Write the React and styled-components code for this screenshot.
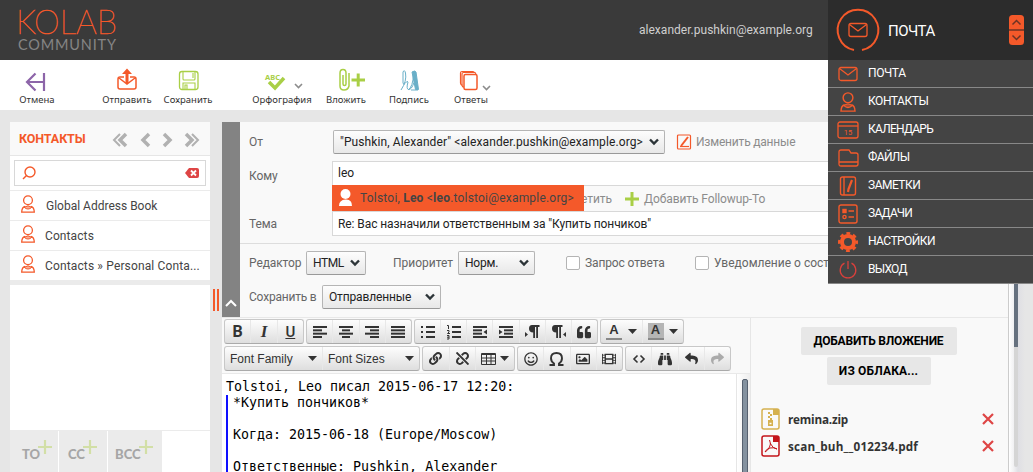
import React from "react";
import styled, { createGlobalStyle, css } from "styled-components";
import {
  FaLink,
  FaUnlink,
  FaRegSmile,
  FaBinoculars,
  FaReply,
  FaShare,
  FaQuoteLeft,
  FaRegImage,
  FaFilm,
} from "react-icons/fa";

const orange = "#f4592a";
const green = "#a9cf46";

const GlobalStyle = createGlobalStyle`
  * { box-sizing: border-box; }
  body {
    margin: 0;
    overflow: hidden;
    background: #e6e6e6;
    font-family: Roboto, "Noto Sans", sans-serif;
    font-size: 12px;
    color: #333;
  }
  svg { display: block; flex: none; overflow: visible; }
`;

const Page = styled.div`
  position: relative;
  display: flex;
  flex-direction: column;
  width: 1033px;
  height: 472px;
  overflow: hidden;
`;

/* letter spacing differs between labels, so every text takes it as a prop */
const Text = styled.span`
  white-space: nowrap;
  letter-spacing: ${(p) => p.$ls || 0}px;
`;

const Header = styled.header`
  display: flex;
  flex: none;
  align-items: center;
  height: 60px;
  padding-left: 18px;
  background: #3a3a3a;
`;

const User = styled(Text)`
  width: 174px;
  margin: 0 15px 0 auto;
  color: #cfcfcf;
`;

const Current = styled.div`
  display: flex;
  align-items: center;
  width: 205px;
  height: 60px;
  padding: 0 9px 0 9px;
  background: #2c2c2c;
  color: #fff;
  font-size: 15px;

  ${Text} { margin: 2px auto 0 9px; }
`;

const TaskMenu = styled.nav`
  position: absolute;
  top: 60px;
  right: 0;
  width: 205px;
  background: #444;
  z-index: 2;
`;

const TaskItem = styled.a`
  display: flex;
  align-items: center;
  gap: 9px;
  height: 28px;
  padding-left: 9px;
  border-bottom: 1px solid #888;
  color: #fff;
  font-size: 12px;

  ${Text} { margin-top: -2px; }
`;

const IconSlot = styled.span`
  display: flex;
  justify-content: center;
  width: 22px;
`;

const Toolbar = styled.div`
  display: flex;
  flex: none;
  height: 50px;
  padding-left: 7px;
  background: #fff;
`;

const Tool = styled.button`
  display: flex;
  flex-direction: column;
  align-items: center;
  justify-content: space-between;
  width: ${(p) => p.$w}px;
  height: 46px;
  margin: 0 0 0 ${(p) => p.$gap || 0}px;
  padding: 8px 0 0;
  border: 0;
  background: none;
  color: #333;
  font: 9.5px/12px "Noto Sans", sans-serif;
`;

const Content = styled.main`
  display: flex;
  flex: 1;
  padding: 12px 0 0 10px;
`;

const Sidebar = styled.aside`
  display: flex;
  flex-direction: column;
  width: 200px;
  height: 350px;
  background: #ebebeb;
`;

const SideTitle = styled.div`
  display: flex;
  align-items: center;
  justify-content: space-between;
  height: 34px;
  padding: 0 10px 0 9px;
  border-bottom: 1px solid #e6e6e6;
  background: #f9f9f9;
  color: ${orange};
  font-weight: 700;
  font-size: 12.5px;

  svg { margin-top: 3px; }
`;

const SearchRow = styled.div`
  height: 35px;
  padding: 4px;
  border-bottom: 1px solid #ebebeb;
  background: #fff;
`;

const SearchBox = styled.div`
  display: flex;
  align-items: center;
  justify-content: space-between;
  height: 26px;
  padding: 0 6px 0 7px;
  border: 1px solid #d8d8d8;
`;

const Book = styled.div`
  display: flex;
  align-items: center;
  gap: ${(p) => p.$gap || 10}px;
  height: 29px;
  margin-bottom: 1px;
  padding-left: 11px;
  background: #fff;
  color: #444;

  svg { margin-top: -3px; }
`;

const ContactList = styled.div`
  height: 145px;
  margin-top: 4px;
  background: #fff;
`;

const Recipients = styled.div`
  display: flex;
  flex: 1;
  gap: 1px;
  margin-top: 1px;
  background: #fff;
`;

const Recipient = styled.button`
  display: flex;
  width: ${(p) => p.$w}px;
  padding: 9px 0 0 ${(p) => p.$pad}px;
  border: 0;
  background: #ebebeb;
  color: #a6a6a6;
  font: 900 13px/28px Lato, sans-serif;

  svg { margin-left: -2px; }
`;

const Splitter = styled.div`
  display: flex;
  gap: 2px;
  width: 12px;
  padding: 167px 3px 0;

  i { width: 2px; height: 22px; background: ${orange}; }
`;

const Compose = styled.section`
  display: flex;
  flex-direction: column;
  width: 787px;
  border-right: 1px solid #ccc;
  background: #f9f9f9;
`;

const HeaderForm = styled.div`
  display: flex;
  height: 195px;
`;

const Collapse = styled.button`
  display: flex;
  align-items: flex-end;
  justify-content: center;
  width: 18px;
  padding: 0 0 10px;
  border: 0;
  background: #838383;
`;

const Fields = styled.div`
  display: flex;
  flex: 1;
  flex-direction: column;
  color: #666;
`;

const Row = styled.div`
  display: flex;
  align-items: center;
  height: ${(p) => p.$h}px;
  padding: 0 0 ${(p) => p.$pb || 0}px 9px;
`;

const Label = styled(Text)`
  width: ${(p) => p.$w}px;
  padding-top: ${(p) => p.$pt || 0}px;
`;

const Divided = styled.div`
  padding-top: 8px;
  height: 122px;
  border-bottom: 1px solid #ddd;
`;

const Select = styled.div`
  display: flex;
  align-items: center;
  justify-content: space-between;
  width: ${(p) => p.$w}px;
  height: 24px;
  padding: 0 5px 0 6px;
  border: 1px solid #b5b5b5;
  border-bottom-color: #999;
  border-radius: 2px;
  background: linear-gradient(#fdfdfd, #e8e8e8);
  color: #222;
`;

const FieldInput = styled.div`
  position: relative;
  display: flex;
  flex: 1;
  align-items: center;
  height: 25px;
  padding-left: 5px;
  border: 1px solid #d8d8d8;
  background: #fff;
  color: #222;
`;

const Suggest = styled.div`
  position: absolute;
  top: 23px;
  left: -1px;
  display: flex;
  align-items: center;
  gap: 7px;
  width: 252px;
  height: 27px;
  padding-left: 6px;
  border-bottom: 1px solid #888;
  background: ${orange};
  color: #444;
`;

const Link = styled(Text)`
  color: #8c8c8c;
`;

const Check = styled.i`
  width: 14px;
  height: 14px;
  margin: 0 5px 0 ${(p) => p.$gap}px;
  border: 1px solid #b4b4b4;
  border-radius: 2px;
  background: #fff;
`;

const Body = styled.div`
  display: flex;
  flex: 1;
  border-top: 1px solid #e8e8e8;
`;

const Editor = styled.div`
  display: flex;
  flex-direction: column;
  width: 529px;
  border-right: 1px solid #e6e6e6;
`;

const EditorBar = styled.div`
  display: flex;
  gap: 2px;
  padding: ${(p) => p.$top}px 0 0 2px;
`;

const Group = styled.div`
  display: flex;
  height: 25px;
  width: ${(p) => p.$w}px;
  border: 1px solid #c8c8c8;
  border-bottom-color: #aaa;
  border-radius: 3px;
  background: linear-gradient(#fdfdfd, #dedede);
  color: #333;
`;

const Btn = styled.div`
  display: flex;
  flex: ${(p) => (p.$w ? "none" : 1)};
  align-items: center;
  justify-content: center;
  width: ${(p) => p.$w}px;
  font: ${(p) => p.$font || '700 17px "Liberation Sans"'}, sans-serif;
  ${(p) =>
    p.$spread &&
    css`
      justify-content: space-between;
      padding: 0 5px;
    `}

  & + & { border-left: 1px solid #e8e8e8; }
`;

const ColorMark = styled.span`
  height: 17px;
  width: 16px;
  border-bottom: 2px solid #888;
  background: ${(p) => p.$bg || "none"};
  font: 700 13px/14px "Liberation Sans", sans-serif;
  text-align: center;
`;

const Frame = styled.div`
  display: flex;
  flex: 1;
  height: 99px;
  margin-top: 2px;
  border-top: 1px solid #e9e9e9;
  background: #fff;
`;

const Message = styled.div`
  flex: 1;
  padding: 5px 0 0 4px;
  color: #000;
  font: 13.3px/16px "DejaVu Sans Mono", monospace;
  white-space: pre;
`;

const Quote = styled.div`
  height: 90px;
  padding-left: 5px;
  border-left: 2px solid #1010ff;
`;

const Track = styled.div`
  width: 14px;
  padding: 5px 0 0 5px;
  border-left: 1px solid #e6e6e6;
  background: linear-gradient(90deg, #fff, #eee);

  &::after {
    content: "";
    display: block;
    width: 4px;
    height: 100px;
    border: 1px solid #566170;
    border-radius: 2px;
    background: #8492a0;
  }
`;

const PageTrack = styled.div`
  display: flex;
  flex: 1;
  padding-left: 5px;
  background: linear-gradient(90deg, #fff, #f0f0f2 5px, #dfdfe4 9px, #e6e6e6 16px);

  i {
    width: 4px;
    height: 345px;
    border-radius: 2px;
    background: linear-gradient(#66717f 225px, #d5d5d5 225px);
  }
`;

const Attachments = styled.div`
  display: flex;
  flex: 1;
  flex-direction: column;
  align-items: center;
  padding: 9px 0 0;
`;

const GrayButton = styled.button`
  width: ${(p) => p.$w}px;
  height: 28px;
  margin: 0 2px 2px 0;
  padding: 0;
  border: 0;
  border-radius: 2px;
  background: #e7e7e7;
  color: #000;
  font: 700 12px Roboto, sans-serif;
`;

const Files = styled.div`
  width: 100%;
  padding: 18px 14px 0 10px;
`;

const FileRow = styled.div`
  display: flex;
  align-items: center;
  gap: 8px;
  height: 27px;
  font: 700 11.7px "Open Sans", sans-serif;

  svg:last-child { margin-left: auto; }
`;

const Icon = ({ w = 20, h = 20, color = orange, sw = 1.5, children }) => (
  <svg width={w} height={h} viewBox={`0 0 ${w} ${h}`} fill="none" stroke={color} strokeWidth={sw}>
    {children}
  </svg>
);

const Mail = () => (
  <Icon w={20} h={16} sw={1.3}>
    <rect x="1" y="1.500" width="18" height="13" rx="2" />
    <path d="M1.500 2.500 10 9l8.500-6.500" />
  </Icon>
);

const Person = ({ w = 14, h = 18 }) => (
  <svg width={w} height={h} viewBox="0 0 14 18" fill="none" stroke={orange} strokeWidth="1.300">
    <circle cx="7" cy="5.200" r="4.400" />
    <path d="M4 11.500Q.8 12.300.7 17.200h12.600q-.1-4.900-3.300-5.700" />
    <path d="M3.200 12.300q3.800-3 7.600 0-3.800 3.500-7.600 0Z" fill={orange} fillOpacity=".5" strokeWidth="1" />
  </svg>
);

const Chevron = () => (
  <Icon w={10} h={8} color="#2c3438" sw={2.4}>
    <path d="m1 1.500 4 4 4-4" />
  </Icon>
);

const Plus = ({ s = 14, color = green, sw = 3 }) => (
  <Icon w={s} h={s} color={color} sw={sw}>
    <path d={`M0 ${s / 2}h${s}M${s / 2} 0v${s}`} />
  </Icon>
);

const Caret = () => (
  <svg width="9" height="5" viewBox="0 0 9 5">
    <path d="M0 0h9L4.500 5z" fill="#333" />
  </svg>
);

const Cross = () => (
  <Icon w={12} h={12} color="#de4545" sw={2.2}>
    <path d="m1 1 10 10M11 1 1 11" />
  </Icon>
);

/* paragraph sign with a direction arrow on one side */
const Pilcrow = ({ flip }) => (
  <svg width="15" height="13" viewBox="0 0 15 13" fill="#333">
    <path d={flip ? "M15 7v5l-3-2.500z" : "M0 7v5l3-2.500z"} />
    <path
      transform={flip ? "translate(-3 0)" : undefined}
      d="M7 0h7.500v2H13v11h-1.800V2H10v11H8.200V7.500Q4 7.300 4 3.700T7 0z"
    />
  </svg>
);

/* horizontal bars given as [x, width] */
const Lines = ({ bars, w = 14, children }) => (
  <svg width={w} height="12" viewBox={`0 0 ${w} 12`} fill="#333">
    {bars.map(([x, bw], i) => (
      <rect key={i} x={x} y={i * (10 / (bars.length - 1))} width={bw} height="2" />
    ))}
    {children}
  </svg>
);

const Logo = () => (
  <svg width="98" height="42" viewBox="0 0 98 42" fontFamily="Lato, sans-serif">
    <text
      x="-2"
      y="25"
      fontSize="33"
      fontWeight="100"
      fill={orange}
      stroke={orange}
      strokeWidth=".6"
      textLength="101"
      lengthAdjust="spacingAndGlyphs"
    >
      KOLAB
    </text>
    <text x="0" y="41" fontSize="14.500" fill="#858585" textLength="98" lengthAdjust="spacing">
      COMMUNITY
    </text>
  </svg>
);

const tasks = [
  ["ПОЧТА", <Mail />, -0.35],
  ["КОНТАКТЫ", <Person w={16} h={20} />, -0.45],
  [
    "КАЛЕНДАРЬ",
    <Icon w={22} h={18} sw={1.3}>
      <rect x="1" y="1" width="20" height="16" rx="2" />
      <path d="M1 5h20" />
      <text x="11" y="14" fontSize="7.500" textAnchor="middle" fill={orange} stroke="none">15</text>
    </Icon>,
    -0.75,
  ],
  [
    "ФАЙЛЫ",
    <Icon w={21} h={18} sw={1.3}>
      <path d="M3 1h8l2 3h5q2 0 2 2v9q0 2-2 2H3q-2 0-2-2V3q0-2 2-2ZM1 13h19" />
    </Icon>,
    -0.6,
  ],
  [
    "ЗАМЕТКИ",
    <Icon w={20} h={20} sw={1.4}>
      <rect x="2.500" y="1" width="15" height="18" rx="2" />
      <path d="M6 1v18" />
      <path d="m14 4-3.500 9-.5 3" strokeWidth="2.200" />
    </Icon>,
    -0.5,
  ],
  [
    "ЗАДАЧИ",
    <Icon w={20} h={20} sw={1.4}>
      <rect x="1" y="1" width="18" height="18" rx="2" />
      <path d="M10.500 7H16m-5.500 6H16" />
      <rect x="5" y="5.500" width="3" height="3" fill={orange} />
      <circle cx="6.500" cy="13" r="1.600" />
    </Icon>,
    -0.75,
  ],
  [
    "НАСТРОЙКИ",
    <Icon w={20} h={20}>
      <circle cx="10" cy="10" r="6" strokeWidth="4" />
      <circle cx="10" cy="10" r="8.700" strokeWidth="2.600" strokeDasharray="3.800 3.033" strokeDashoffset="1.900" />
    </Icon>,
    -0.55,
  ],
  [
    "ВЫХОД",
    <Icon w={20} h={20} sw={1.3} color="#d8403c">
      <path d="M6.500 3.200a7.800 7.800 0 1 0 7 0M10 1v8" />
    </Icon>,
    -0.75,
  ],
];

const books = [
  { name: "Global Address Book", gap: 11, ls: 0 },
  { name: "Contacts", ls: 0.1 },
  { name: "Contacts » Personal Conta...", ls: 0.14 },
];

const App = () => (
  <>
    <GlobalStyle />
    <Page>
      <Header>
        <Logo />
        <User $ls={0.02}>alexander.pushkin@example.org</User>
        <Current>
          <Icon w={42} h={42} sw={2}>
            <path d="M17 41A20.300 20.300 0 1 1 25 41" />
            <rect x="12" y="14.500" width="18" height="13" rx="2" strokeWidth="1.300" />
            <path d="m12.500 15.500 8.500 6.500 8.500-6.500" strokeWidth="1.300" />
          </Icon>
          <Text $ls={-0.5}>ПОЧТА</Text>
          <svg width="15" height="30" viewBox="0 0 15 30" fill="none">
            <rect width="15" height="30" rx="3.500" fill={orange} />
            <path d="M0 15h15M3.500 9.500l4-4 4 4M3.500 20.500l4 4 4-4" stroke="#6b3325" strokeWidth="1.500" />
          </svg>
        </Current>
      </Header>

      <TaskMenu>
        {tasks.map(([name, icon, ls]) => (
          <TaskItem key={name}>
            <IconSlot>{icon}</IconSlot>
            <Text $ls={ls}>{name}</Text>
          </TaskItem>
        ))}
      </TaskMenu>

      <Toolbar>
        <Tool $w={60}>
          <Icon w={20} h={24} color="#8d65a9" sw={2.2}>
            <path d="M17 5v18M17 14H.5M8.500 5.500 0 14l8.500 8.500" />
          </Icon>
          <Text>Отмена</Text>
        </Tool>
        <Tool $w={60} $gap={30}>
          <Icon w={20} h={24}>
            <path d="M7 9H3Q1 9 1 11v8q0 2 2 2h14q2 0 2-2v-8q0-2-2-2h-4M2 10l8 6 8-6" />
            <path d="M8.500 15V6H5l5-5.500L15 6h-3.500v9z" fill={orange} stroke="none" />
          </Icon>
          <Text>Отправить</Text>
        </Tool>
        <Tool $w={60} $gap={1}>
          <Icon w={20} h={24} color={green} sw={1.3}>
            <rect x="1.500" y="3.500" width="18.500" height="18" rx="2.500" />
            <path d="M5 4v7q0 1 1 1h10q1 0 1-1V4M15 5v5M5 21v-6h12v6M7 21v-4h2v4" strokeWidth="1.100" />
          </Icon>
          <Text>Сохранить</Text>
        </Tool>
        <Tool $w={70} $gap={29}>
          <Icon w={60} h={24} color={green} sw={3.5}>
            <path d="m17 14 6 6 9-10" />
            <text x="13" y="12" fontSize="7.500" fontWeight="700" fill={green} stroke="none" fontFamily="Noto Sans, sans-serif">
              ABC
            </text>
            <path d="m43 16 3.500 3.500L50 16" stroke="#8c8c8c" strokeWidth="1.600" />
          </Icon>
          <Text>Орфография</Text>
        </Tool>
        <Tool $w={58}>
          <Icon w={14} h={24} color={green} sw={1.5}>
            <path d="M4 7v9q0 1.500 1.500 1.500T7 16V5q0-3.500-3-3.500T1 5v13q0 4 4 4t5-4V5" />
            <path d="M12.500 12H26M19.200 5.500v13" strokeWidth="3" />
          </Icon>
          <Text>Вложить</Text>
        </Tool>
        <Tool $w={60} $gap={4}>
          <Icon w={18} h={24} color="#69afc8" sw={1}>
            <path d="M1 22Q7 13 5.500 5 4.500 1 3 4v11q.5 3 2.500 0T8 14q-2 7 .5 7.500 3 .5 5.500-7" />
            <path d="M8 22q5-3 5.500-16M11 22h7" />
            <path d="M12 4q3-2 4 0l2.500 17.500h-3z" fill="#69afc8" />
          </Icon>
          <Text>Подпись</Text>
        </Tool>
        <Tool $w={60} $gap={2}>
          <Icon w={40} h={24} sw={1.2}>
            <path d="M11.500 17h-1q-1-1-1-2V5q0-1.500 1.500-1.500h11l1.500 1" />
            <path d="M13 19h-1q-1-1-1-2V6q0-1.500 1.500-1.500H24l1 1.500" />
            <rect x="13" y="6.500" width="13" height="15" rx="1.500" strokeWidth="1.500" />
            <path d="m32 18 3.500 3.500L39 18" stroke="#8c8c8c" strokeWidth="1.600" />
          </Icon>
          <Text>Ответы</Text>
        </Tool>
      </Toolbar>

      <Content>
        <Sidebar>
          <SideTitle>
            <Text $ls={-0.1}>КОНТАКТЫ</Text>
            <svg width="88" height="14" viewBox="0 0 88 14" fill="none" stroke="#b1b1b1" strokeWidth="3.500">
              <path d="M14 1 8 7l6 6M37 1l-6 6 6 6M52 1l6 6-6 6M74 1l6 6-6 6" />
              <path d="M8 1 2 7l6 6M80 1l6 6-6 6" strokeWidth="2" />
            </svg>
          </SideTitle>
          <SearchRow>
            <SearchBox>
              <Icon w={14} h={14} sw={1.4}>
                <circle cx="8" cy="6" r="5" />
                <path d="M4.500 9.500 1 13" />
              </Icon>
              <svg width="14" height="10" viewBox="0 0 14 10">
                <path d="M4 0h8q2 0 2 2v6q0 2-2 2H4L0 5z" fill="#de4545" />
                <path d="m6 2.500 5 5m0-5-5 5" stroke="#fff" strokeWidth="1.800" />
              </svg>
            </SearchBox>
          </SearchRow>
          {books.map((b) => (
            <Book key={b.name} $gap={b.gap}>
              <Person />
              <Text $ls={b.ls}>{b.name}</Text>
            </Book>
          ))}
          <ContactList />
          <Recipients>
            <Recipient $w={48} $pad={12}>
              TO<Plus color="#d2dfa6" sw={2.2} />
            </Recipient>
            <Recipient $w={48} $pad={9}>
              CC<Plus color="#d2dfa6" sw={2.2} />
            </Recipient>
            <Recipient $w={54} $pad={7}>
              BCC<Plus color="#d2dfa6" sw={2.2} />
            </Recipient>
          </Recipients>
        </Sidebar>
        <Splitter>
          <i />
          <i />
        </Splitter>

        <Compose>
          <HeaderForm>
            <Collapse>
              <Icon w={12} h={8} color="#fff" sw={2}>
                <path d="m1 7 5-5 5 5" />
              </Icon>
            </Collapse>
            <Fields>
              <Divided>
                <Row $h={24}>
                  <Label $w={84}>От</Label>
                  <Select $w={332}>
                    <Text $ls={0.1}>"Pushkin, Alexander" &lt;alexander.pushkin@example.org&gt;</Text>
                    <Chevron />
                  </Select>
                  <Icon w={31} h={16} sw={1.2}>
                    <rect x="12.500" y="1" width="13" height="14" rx="1" />
                    <path d="M15 12.500h9" />
                    <path d="m23 3-7 9" strokeWidth="2" />
                  </Icon>
                  <Link $ls={-0.2}>Изменить данные</Link>
                </Row>
                <Row $h={38}>
                  <Label $w={83} $pt={6} $ls={-0.1}>Кому</Label>
                  <FieldInput>
                    <Text>leo</Text>
                    <Suggest>
                      <svg width="15" height="18" viewBox="0 0 15 18" fill="#fff">
                        <circle cx="7.500" cy="5" r="5" />
                        <path d="M1 17q0-6 6.500-6.500T14 17z" />
                      </svg>
                      <Text $ls={0.2}>
                        Tolstoi, <b>Leo</b> &lt;<b>leo</b>.tolstoi@example.org&gt;
                      </Text>
                    </Suggest>
                  </FieldInput>
                </Row>
                <Row $h={17} $pb={4}>
                  <Label $w={332} />
                  <Label as={Link} $ls={-0.05}>етить</Label>
                  <Label $w={13} />
                  <Plus />
                  <Label $w={5} />
                  <Link $ls={-0.1}>Добавить Followup-To</Link>
                </Row>
                <Row $h={29}>
                  <Label $w={83} $ls={-0.1}>Тема</Label>
                  <FieldInput>
                    <Text $ls={-0.08}>Re: Вас назначили ответственным за "Купить пончиков"</Text>
                  </FieldInput>
                </Row>
              </Divided>
              <Row $h={37}>
                <Label $w={57} $ls={-0.1}>Редактор</Label>
                <Select $w={60}>
                  <Text $ls={-0.4}>HTML</Text>
                  <Chevron />
                </Select>
                <Label $w={27} />
                <Label $w={65}>Приоритет</Label>
                <Select $w={77}>
                  <Text $ls={-0.2}>Норм.</Text>
                  <Chevron />
                </Select>
                <Check $gap={31} />
                <Label $w={80} $ls={-0.12}>Запрос ответа</Label>
                <Check $gap={30} />
                <Text $ls={0}>Уведомление о сост</Text>
              </Row>
              <Row $h={32}>
                <Label $w={73} $ls={-0.2}>Сохранить в</Label>
                <Select $w={119}>
                  <Text $ls={-0.15}>Отправленные</Text>
                  <Chevron />
                </Select>
              </Row>
            </Fields>
          </HeaderForm>

          <Body>
            <Editor>
              <EditorBar $top={1}>
                <Group $w={80}>
                  <Btn $font='700 16px Roboto'>B</Btn>
                  <Btn $font='italic 700 17px "Liberation Serif"'>I</Btn>
                  <Btn $font='500 15px Roboto'><u>U</u></Btn>
                </Group>
                <Group $w={106}>
                  <Btn><Lines bars={[[0, 14], [0, 9], [0, 14], [0, 9]]} /></Btn>
                  <Btn><Lines bars={[[0, 14], [3, 8], [0, 14], [3, 8]]} /></Btn>
                  <Btn><Lines bars={[[0, 14], [5, 9], [0, 14], [5, 9]]} /></Btn>
                  <Btn><Lines bars={[[0, 14], [0, 14], [0, 14], [0, 14]]} /></Btn>
                </Group>
                <Group $w={184}>
                  <Btn>
                    <Lines bars={[[5, 9], [5, 9], [5, 9]]}>
                      <path d="M0 0h2v2H0zM0 5h2v2H0zM0 10h2v2H0z" />
                    </Lines>
                  </Btn>
                  <Btn>
                    <Lines bars={[[5, 9], [5, 9], [5, 9]]}>
                      <path d="M0-.5h1.500V3M0 4.500h2V6L.5 7.500H3M0 9.500h2V13H0M0 11.200h2" fill="none" stroke="#333" />
                    </Lines>
                  </Btn>
                  <Btn>
                    <Lines bars={[[0, 14], [0, 9], [0, 9], [0, 14]]}>
                      <path d="m14 3.500v5L10.500 6z" />
                    </Lines>
                  </Btn>
                  <Btn>
                    <Lines bars={[[0, 14], [5, 9], [5, 9], [0, 14]]}>
                      <path d="M0 3.500v5L3.500 6z" />
                    </Lines>
                  </Btn>
                  <Btn><Pilcrow /></Btn>
                  <Btn><Pilcrow flip /></Btn>
                  <Btn><FaQuoteLeft size={14} /></Btn>
                </Group>
                <Group $w={84}>
                  <Btn $spread><ColorMark>A</ColorMark><Caret /></Btn>
                  <Btn $spread><ColorMark $bg="#b5b5b5">A</ColorMark><Caret /></Btn>
                </Group>
              </EditorBar>
              <EditorBar $top={2}>
                <Group $w={196}>
                  <Btn $spread $w={97} $font='12px "Liberation Sans"'><Text>Font Family</Text><Caret /></Btn>
                  <Btn $spread $w={97} $font='12px "Liberation Sans"'><Text>Font Sizes</Text><Caret /></Btn>
                </Group>
                <Group $w={93}>
                  <Btn><FaLink size={13} /></Btn>
                  <Btn><FaUnlink size={13} /></Btn>
                  <Btn $w={39} $spread>
                    <Icon w={15} h={12} color="#333" sw={1}>
                      <path d="M.5.5h14v11H.5zM0 1.500h15M.5 5h14M.5 8h14M5.500 1v10M10 1v10" />
                    </Icon>
                    <Caret />
                  </Btn>
                </Group>
                <Group $w={106}>
                  <Btn><FaRegSmile size={14} /></Btn>
                  <Btn>
                    <Icon w={15} h={14} color="#333" sw={1.9}>
                      <path d="M.5 13H5v-1.500Q2 9.500 2 6.200 2 1 7.500 1T13 6.200q0 3.300-3 5.300V13h4.500" />
                    </Icon>
                  </Btn>
                  <Btn><FaRegImage size={14} /></Btn>
                  <Btn><FaFilm size={14} /></Btn>
                </Group>
                <Group $w={106}>
                  <Btn>
                    <Icon w={12} h={8} color="#333" sw={1.6}>
                      <path d="M4.500.5 1 4l3.500 3.500M7.500.5 11 4 7.500 7.500" />
                    </Icon>
                  </Btn>
                  <Btn><FaBinoculars size={14} /></Btn>
                  <Btn><FaReply size={13} /></Btn>
                  <Btn><FaShare size={13} color="#aaa" /></Btn>
                </Group>
              </EditorBar>
              <Frame>
                <Message>
                  Tolstoi, Leo писал 2015-06-17 12:20:
                  <Quote>{"*Купить пончиков*\n\nКогда: 2015-06-18 (Europe/Moscow)\n\nОтветственные: Pushkin, Alexander"}</Quote>
                </Message>
                <Track />
              </Frame>
            </Editor>

            <Attachments>
              <GrayButton $w={156}><Text $ls={-0.2}>ДОБАВИТЬ ВЛОЖЕНИЕ</Text></GrayButton>
              <GrayButton $w={104}><Text $ls={0.15}>ИЗ ОБЛАКА...</Text></GrayButton>
              <Files>
                <FileRow>
                  <Icon w={19} h={22} color="#d5b150">
                    <rect x="1" y="1" width="17" height="20" rx="2" />
                    <path d="M12 1h6v6h-6zM7 4h2v2H7zM9 6h2v2H9zM7 8h2v2H7zM9 10h2v2H9zM7 12h5v6H7z" fill="#d5b150" stroke="none" />
                    <path d="M8.500 15.500h2" stroke="#fff" />
                  </Icon>
                  <Text $ls={-0.2}>remina.zip</Text>
                  <Cross />
                </FileRow>
                <FileRow>
                  <Icon w={19} h={22} color="#c3141a">
                    <rect x="1" y="1" width="17" height="20" rx="2" />
                    <path d="M12 1h6v6h-6z" fill="#c3141a" stroke="none" />
                    <path d="M8.500 5q2 4 0 7-2 4-4.500 5 1-3 5-4t7 1q-4 0-7-6" strokeWidth="1" />
                  </Icon>
                  <Text $ls={0.18}>scan_buh__012234.pdf</Text>
                  <Cross />
                </FileRow>
              </Files>
            </Attachments>
          </Body>
        </Compose>
        <PageTrack>
          <i />
        </PageTrack>
      </Content>
    </Page>
  </>
);

export default App;
